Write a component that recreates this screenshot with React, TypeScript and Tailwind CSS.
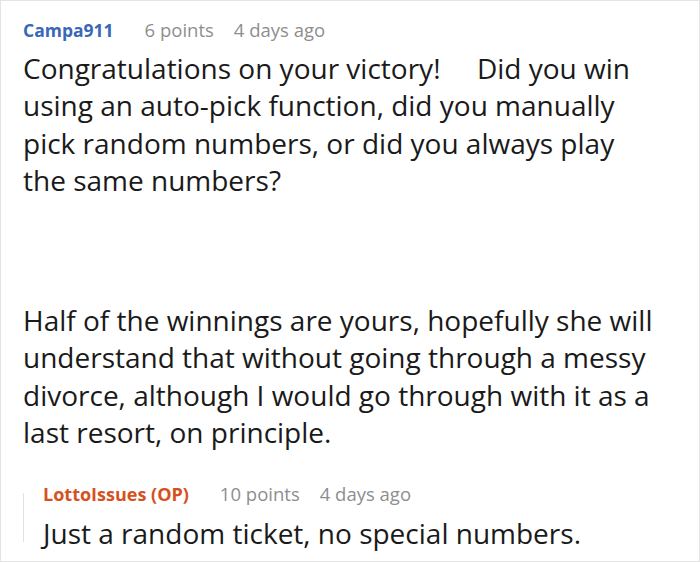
import React from "react";

const font = { fontFamily: '"Open Sans", "Noto Sans", sans-serif' };

const Meta: React.FC<{ user: string; points: string; age: string; userClass: string }> = ({ user, points, age, userClass }) => (
  <div className="flex items-center text-[18.5px] leading-[24px] whitespace-nowrap">
    <span className={`font-bold ${userClass}`}>{user}</span>
    <span className="ml-[31px] text-[#8e8e8e]">{points}</span>
    <span className="ml-[20px] text-[#8e8e8e]">{age}</span>
  </div>
);

export default function App() {
  return (
    <div
      className="w-[700px] h-[562px] border border-[#e4e4e4] bg-white pl-[22px] pr-2 pt-[17px] overflow-hidden text-[#1a1a1a]"
      style={font}
    >
      <Meta user="Campa911" points="6 points" age="4 days ago" userClass="text-[17.5px] text-[#3868b7]" />

      <p className="mt-[8px] text-[28px] leading-[37.3px] whitespace-nowrap">
        Congratulations on your victory!&nbsp;&nbsp;&nbsp;&nbsp; Did you win
        <br />
        using an auto-pick function, did you manually
        <br />
        pick random numbers, or did you always play
        <br />
        the same numbers?
      </p>

      <p className="mt-[103px] text-[28px] leading-[37.3px] whitespace-nowrap">
        Half of the winnings are yours, hopefully she will
        <br />
        understand that without going through a messy
        <br />
        divorce, although I would go through with it as a
        <br />
        last resort, on principle.
      </p>

      <div className="flex mt-[31px]">
        <div className="w-px h-[49px] mt-[11px] bg-[#e2e2e2]" />
        <div className="pl-[19px]">
          <Meta user="LottoIssues (OP)" points="10 points" age="4 days ago" userClass="text-[18px] text-[#d5511e]" />
          <p className="mt-[9px] text-[28px] leading-[37px] whitespace-nowrap">
            Just a random ticket, no special numbers.
          </p>
        </div>
      </div>
    </div>
  );
}
